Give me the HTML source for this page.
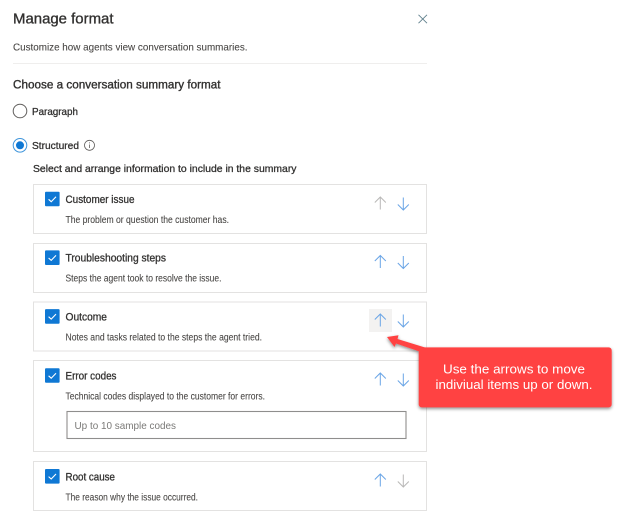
<!DOCTYPE html>
<html>
<head>
<meta charset="utf-8">
<style>
html,body{margin:0;padding:0;background:#fff;width:624px;height:522px;overflow:hidden}
svg{display:block;position:absolute;left:0;top:0;filter:blur(.3px)}
text{font-family:"Liberation Sans",sans-serif;fill:#323130}
.t{font-size:11px;stroke:#323130;stroke-width:.3}
.d{font-size:9.7px;fill:#484644;stroke:#484644;stroke-width:.08}
.card{fill:#fff;stroke:#e3e2e1;stroke-width:1}
.cb{fill:#0f78d4}
.ck{fill:none;stroke:#fff;stroke-width:1.1}
.ar{fill:none;stroke-width:1}
</style>
</head>
<body>
<svg width="624" height="522" viewBox="0 0 624 522" xmlns="http://www.w3.org/2000/svg">
<defs>
<filter id="sh" x="-10%" y="-10%" width="120%" height="130%"><feDropShadow dx="0" dy="1.5" stdDeviation="1.5" flood-color="#000" flood-opacity=".45"/></filter>
<g id="up"><path class="ar" d="M0 -6.5V6M-5.5 -1L0 -6.5L5.5 -1"/></g>
<g id="dn"><path class="ar" d="M0 6.5V-6M-5.5 1L0 6.5L5.5 1"/></g>
<g id="cb"><rect class="cb" x="0" y="0" width="14.6" height="14.6" rx="1"/><path class="ck" d="M3.6 7.6L6.2 10L11 5"/></g>
</defs>

<text x="13" y="23.5" font-size="15" textLength="100.5" lengthAdjust="spacingAndGlyphs" style="stroke:#323130;stroke-width:.35">Manage format</text>
<path d="M418.5 14.8L427 23.2M427 14.8L418.5 23.2" stroke="#5f7f8c" stroke-width=".9" fill="none"/>
<text x="13" y="50.5" font-size="10.5" style="fill:#484644;stroke:#484644;stroke-width:.08" textLength="234.5" lengthAdjust="spacingAndGlyphs">Customize how agents view conversation summaries.</text>
<rect x="13" y="63" width="414" height="1" fill="#efeeed"/>
<text x="13" y="88.5" font-size="11.5" textLength="207.5" lengthAdjust="spacingAndGlyphs" style="stroke:#323130;stroke-width:.35">Choose a conversation summary format</text>

<circle cx="20" cy="111" r="6.8" fill="#fff" stroke="#605e5c" stroke-width="1"/>
<text class="t" x="32" y="115" textLength="46" lengthAdjust="spacingAndGlyphs" style="font-size:10.5px">Paragraph</text>

<circle cx="20" cy="145.3" r="6.8" fill="#fff" stroke="#3f95db" stroke-width="1"/>
<circle cx="20" cy="145.3" r="4" fill="#0f78d4"/>
<text class="t" x="32" y="149" textLength="47" lengthAdjust="spacingAndGlyphs" style="font-size:10.5px">Structured</text>
<circle cx="89.5" cy="145.3" r="5" fill="none" stroke="#605e5c" stroke-width=".8"/>
<path d="M89.5 144.5V148M89.5 142.4V143.4" stroke="#605e5c" stroke-width=".8"/>
<text class="t" x="33" y="172" textLength="263.5" lengthAdjust="spacingAndGlyphs" style="font-size:10.5px">Select and arrange information to include in the summary</text>

<!-- Card 1 -->
<rect class="card" x="33.5" y="184.5" width="393" height="49"/>
<use href="#cb" x="45" y="191.7"/>
<text class="t" x="65.5" y="202.8" textLength="69" lengthAdjust="spacingAndGlyphs">Customer issue</text>
<text class="d" x="65.5" y="223" textLength="163.5" lengthAdjust="spacingAndGlyphs">The problem or question the customer has.</text>
<use href="#up" x="380.3" y="203.5" stroke="#b9b8b7"/>
<use href="#dn" x="403.3" y="203.5" stroke="#6aa5e6"/>

<!-- Card 2 -->
<rect class="card" x="33.5" y="243.5" width="393" height="49"/>
<use href="#cb" x="45" y="250.4"/>
<text class="t" x="65.5" y="261.6" textLength="100.5" lengthAdjust="spacingAndGlyphs">Troubleshooting steps</text>
<text class="d" x="65.5" y="281.7" textLength="156" lengthAdjust="spacingAndGlyphs">Steps the agent took to resolve the issue.</text>
<use href="#up" x="380.3" y="262" stroke="#6aa5e6"/>
<use href="#dn" x="403.3" y="262" stroke="#6aa5e6"/>

<!-- Card 3 -->
<rect class="card" x="33.5" y="302" width="393" height="49"/>
<use href="#cb" x="45" y="309.1"/>
<text class="t" x="65.5" y="320.4" textLength="41.5" lengthAdjust="spacingAndGlyphs">Outcome</text>
<text class="d" x="65.5" y="340.6" textLength="196.5" lengthAdjust="spacingAndGlyphs">Notes and tasks related to the steps the agent tried.</text>
<rect x="369" y="309" width="23" height="23" fill="#f3f2f1"/>
<use href="#up" x="380.3" y="320.5" stroke="#6aa5e6"/>
<use href="#dn" x="403.3" y="320.5" stroke="#6aa5e6"/>

<!-- Card 4 -->
<rect class="card" x="33.5" y="360.5" width="393" height="91"/>
<use href="#cb" x="45" y="368.2"/>
<text class="t" x="65.5" y="379.3" textLength="51" lengthAdjust="spacingAndGlyphs">Error codes</text>
<text class="d" x="65.5" y="399.3" textLength="199.5" lengthAdjust="spacingAndGlyphs">Technical codes displayed to the customer for errors.</text>
<rect x="67" y="411.5" width="339" height="27" fill="#fff" stroke="#8f8e8d" stroke-width="1.1"/>
<text x="74.5" y="429" font-size="10.5" style="fill:#7a7977" textLength="101.5" lengthAdjust="spacingAndGlyphs">Up to 10 sample codes</text>
<use href="#up" x="380.3" y="379.5" stroke="#6aa5e6"/>
<use href="#dn" x="403.3" y="379.5" stroke="#6aa5e6"/>

<!-- Card 5 -->
<rect class="card" x="33.5" y="461.5" width="393" height="49"/>
<use href="#cb" x="45" y="469"/>
<text class="t" x="65.5" y="480.3" textLength="49.5" lengthAdjust="spacingAndGlyphs">Root cause</text>
<text class="d" x="65.5" y="500.3" textLength="132.5" lengthAdjust="spacingAndGlyphs">The reason why the issue occurred.</text>
<use href="#up" x="380.3" y="480.5" stroke="#6aa5e6"/>
<use href="#dn" x="403.3" y="480.5" stroke="#b9b8b7"/>

<!-- Callout -->
<g filter="url(#sh)">
<path d="M387 337L398.5 335.2L397.5 339L425 347.5L421 352L396 343.5L394.5 347Z" fill="#ff4343"/>
<rect x="418.7" y="347.4" width="193" height="60" rx="3" fill="#ff4343"/>
</g>
<text x="443" y="373.3" font-size="12.5" style="fill:#fff" textLength="142" lengthAdjust="spacingAndGlyphs">Use the arrows to move</text>
<text x="435.5" y="389" font-size="12.5" style="fill:#fff" textLength="157" lengthAdjust="spacingAndGlyphs">indiviual items up or down.</text>
</svg>
</body>
</html>
